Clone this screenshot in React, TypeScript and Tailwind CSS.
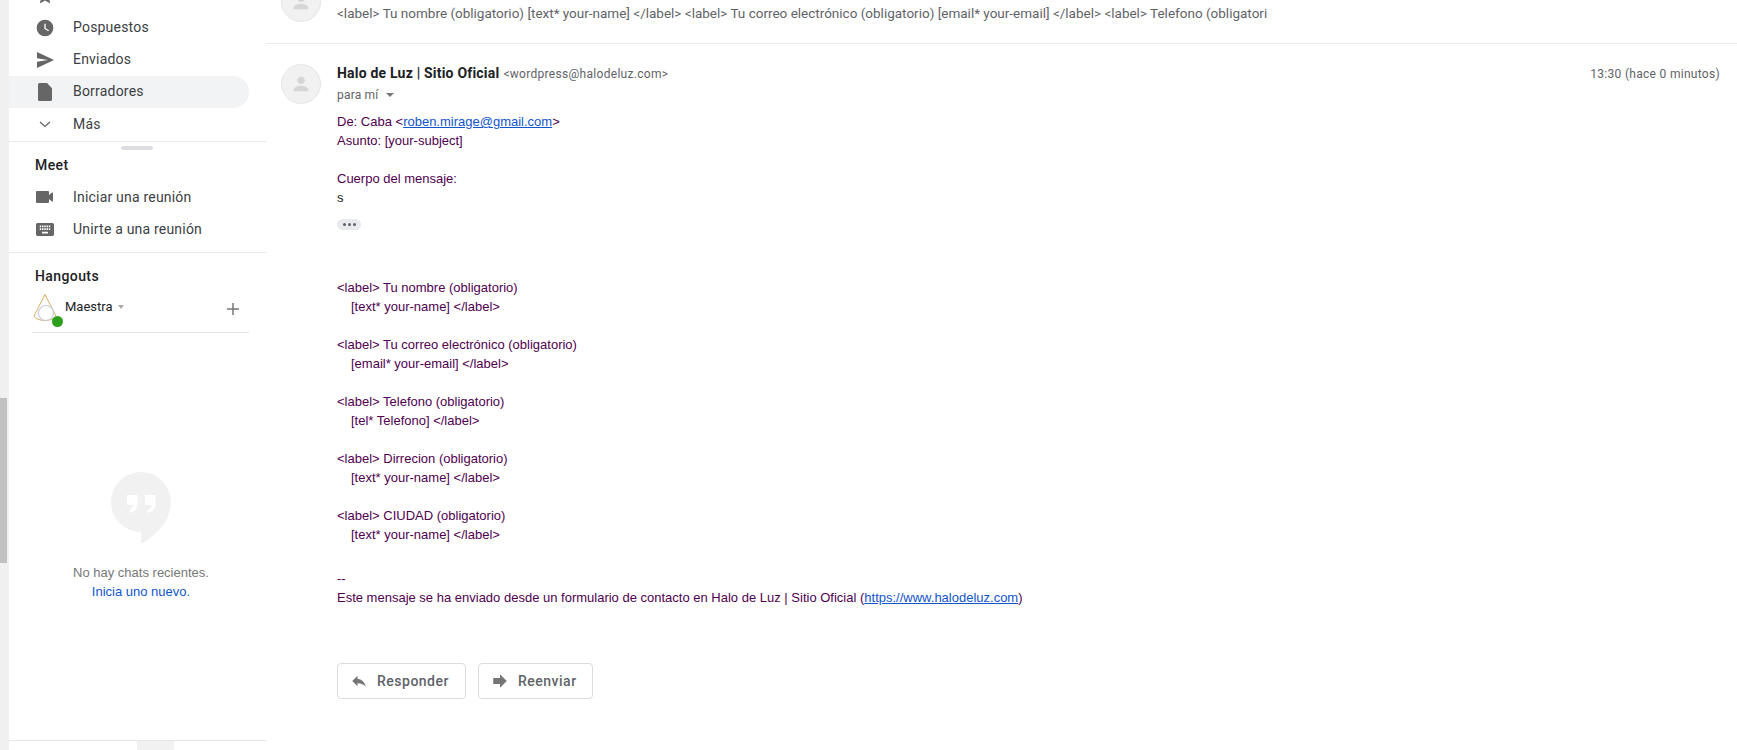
import React from "react";

const roboto = "font-['Roboto','Liberation_Sans',sans-serif]";

function Row({ icon, label, active, up }: { icon: React.ReactNode; label: string; active?: boolean; up?: boolean }) {
  return (
    <div className={`flex h-8 w-[240px] items-center rounded-r-full ${active ? "bg-[#f1f3f4]" : ""}`}>
      <div className="flex w-[64px] justify-center pl-[8px] text-[#666]">{icon}</div>
      <span className={`${roboto} ${up ? "-mt-[2px]" : ""} text-[14px] tracking-[0.2px] text-[#3c4043]`}>{label}</span>
    </div>
  );
}

const Star = () => (
  <svg width="20" height="20" viewBox="0 0 24 24" fill="#666"><path d="M12 17.3l6.2 3.7-1.6-7L22 9.2l-7.2-.6L12 2 9.2 8.6 2 9.2 7.5 14l-1.7 7z" /></svg>
);
const Clock = () => (
  <svg width="20" height="20" viewBox="0 0 24 24" fill="#666"><path fillRule="evenodd" d="M12 2a10 10 0 100 20 10 10 0 000-20zm.800 5h-1.600v6l4.800 2.900.800-1.300-4-2.400z" /></svg>
);
const Send = () => (
  <svg width="20" height="20" viewBox="0 0 20 20" fill="#666"><path d="M2 2l17 8-17 8 0-6.200 11-1.800-11-1.800z" /></svg>
);
const Draft = () => (
  <svg width="20" height="20" viewBox="0 0 20 20" fill="#666"><path d="M4.500 1h7.500l5 5.200v11.300a1.500 1.500 0 01-1.500 1.500h-11a1.500 1.500 0 01-1.500-1.500v-15a1.500 1.500 0 011.500-1.500z" /></svg>
);
const Chevron = () => (
  <svg width="20" height="20" viewBox="0 0 20 20" fill="none" stroke="#666" strokeWidth="1.200"><path d="M5 8l5 4.500 5-4.500" /></svg>
);
const Video = () => (
  <svg width="20" height="20" viewBox="0 0 20 20" fill="#666"><path d="M2 4h11a1 1 0 011 1v3l3-2.500h1v9h-1l-3-2.500v3a1 1 0 01-1 1h-11a1 1 0 01-1-1v-10a1 1 0 011-1z" /></svg>
);
const Keyboard = () => (
  <svg width="18" height="13" viewBox="0 5 24 15" preserveAspectRatio="none" fill="#666"><path d="M22 5H2C.9 5 0 5.900 0 7v11c0 1.100.9 2 2 2h20c1.100 0 2-.9 2-2V7c0-1.100-.9-2-2-2zM11 8h2v2h-2V8zm0 3h2v2h-2v-2zM8 8h2v2H8V8zm0 3h2v2H8v-2zm-1 2H5v-2h2v2zm0-3H5V8h2v2zm9 7H8v-2h8v2zm0-4h-2v-2h2v2zm0-3h-2V8h2v2zm3 3h-2v-2h2v2zm0-3h-2V8h2v2z" /></svg>
);
const Person = ({ size }: { size: number }) => (
  <svg width={size} height={size} viewBox="0 0 24 24" fill="#d6d6d6"><circle cx="12" cy="8" r="4" /><path d="M4 20v-1.500c0-3 5.300-4.500 8-4.500s8 1.500 8 4.500V20z" /></svg>
);

function Avatar() {
  return (
    <div className="flex h-10 w-10 shrink-0 items-center justify-center rounded-full border border-[#e6e6e6] bg-[#f1f1f1]">
      <Person size={22} />
    </div>
  );
}

function Sidebar() {
  return (
    <aside className="relative flex h-[750px] w-[257px] shrink-0 flex-col">
      <div className="-mt-[20px]">
        <Row icon={<Star />} label="" />
        <Row icon={<Clock />} label="Pospuestos" up />
        <Row icon={<Send />} label="Enviados" up />
        <Row icon={<Draft />} label="Borradores" active up />
        <Row icon={<Chevron />} label="Más" />
      </div>
      <div className="mt-[1px] border-t border-[#e9e9e9] pt-1">
        <div className="ml-[112px] h-[4px] w-8 rounded-full bg-[#dadce0]" />
      </div>
      <div className={`${roboto} ml-[26px] mt-[5px] text-[14px] font-medium leading-5 tracking-[0.4px] text-[#202124]`}>Meet</div>
      <div className="mt-[6px]">
        <Row icon={<Video />} label="Iniciar una reunión" />
        <Row icon={<Keyboard />} label="Unirte a una reunión" />
      </div>
      <div className="mt-[7px] border-t border-[#e9e9e9]" />
      <div className={`${roboto} ml-[26px] mt-[13px] text-[14px] font-medium leading-5 tracking-[0.4px] text-[#202124]`}>Hangouts</div>
      <div className="ml-[23px] mt-[6px] flex h-[34px] w-[217px] items-center">
        <div className="relative h-[30px] w-[32px] shrink-0">
          <svg width="30" height="30" viewBox="0 0 30 30" fill="none">
            <path d="M13 0.500L2 22c3 6 19 6 22 0z" stroke="#dcae62" strokeWidth="1" />
            <circle cx="14" cy="19" r="7.500" stroke="#c4cfdc" strokeWidth="1.200" />
          </svg>
          <div className="absolute bottom-[-3px] left-[20px] h-[11px] w-[11px] rounded-full bg-[#2ca01c]" />
        </div>
        <span className={`${roboto} -mt-1 ml-[1px] text-[13px] text-[#202124]`}>Maestra</span>
        <span className="-mt-1 ml-[5px] h-0 w-0 border-x-[3.500px] border-t-[4px] border-x-transparent border-t-[#aaa]" />
        <svg className="ml-auto mr-[10px]" width="12" height="12" viewBox="0 0 12 12" stroke="#777" strokeWidth="1.500"><path d="M6 0v12M0 6h12" /></svg>
      </div>
      <div className="ml-[23px] mt-[6px] w-[217px] border-t border-[#e3e3e3]" />
      <div className="mt-[139px] flex flex-col items-center pl-[7px]">
        <svg width="60" height="72" viewBox="0 0 60 72" fill="#f1f1f1">
          <path d="M30 0a30 30 0 0130 30c0 18-14 33-30 42V60A30 30 0 1130 0z" />
          <path fill="#fff" d="M16 23h10.500v9c0 5-3 8-8 9v-3c2-.5 3.500-2 3.800-5h-6.300zM34 23h10.500v9c0 5-3 8-8 9v-3c2-.5 3.500-2 3.800-5h-6.300z" />
        </svg>
        <div className="mt-[19px] font-['Liberation_Sans',sans-serif] text-[13px] leading-[19px] text-[#777]">No hay chats recientes.</div>
        <div className="font-['Liberation_Sans',sans-serif] text-[13px] leading-[19px] text-[#1155cc]">Inicia uno nuevo.</div>
      </div>
      <div className="absolute bottom-[9px] left-0 h-px w-full bg-[#e6e6e6]" />
      <div className="absolute bottom-0 left-[128px] h-[9px] w-[37px] bg-[#f1f1f1]" />
    </aside>
  );
}

const Q = ({ children }: { children: React.ReactNode }) => <div>{children}</div>;

function Main() {
  return (
    <main className="min-w-0 flex-1 overflow-hidden">
      <div className="flex h-[44px] border-b border-[#ececec] pl-[15px]">
        <div className="-mt-[18px]"><Avatar /></div>
        <div className={`${roboto} ml-[16px] mt-[4px] whitespace-nowrap text-[13.5px] leading-[19px] text-[#5f6368]`}>
          {"<label> Tu nombre (obligatorio) [text* your-name] </label> <label> Tu correo electrónico (obligatorio) [email* your-email] </label> <label> Telefono (obligatori"}
        </div>
      </div>
      <div className="flex pl-[15px] pr-[17px] pt-[20px]">
        <Avatar />
        <div className="-mt-[1px] ml-[16px] min-w-0 flex-1">
          <div className="flex items-baseline justify-between">
            <div className="flex items-baseline">
              <span className={`${roboto} text-[14px] font-bold tracking-[0.2px] text-[#202124]`}>Halo de Luz | Sitio Oficial</span>
              <span className={`${roboto} ml-[4px] text-[12px] tracking-[0.3px] text-[#5f6368]`}>{"<wordpress@halodeluz.com>"}</span>
            </div>
            <span className={`${roboto} text-[12px] tracking-[0.3px] text-[#5f6368]`}>13:30 (hace 0 minutos)</span>
          </div>
          <div className={`${roboto} mt-[1px] flex items-center text-[12px] leading-5 tracking-[0.2px] text-[#5f6368]`}>
            para mí
            <span className="ml-[7px] h-0 w-0 border-x-[4px] border-t-[4px] border-x-transparent border-t-[#777]" />
          </div>
          <div className="mt-[7px] font-['Liberation_Sans',sans-serif] text-[13px] leading-[19px] text-[#500050]">
            <Q>De: Caba &lt;<span className="text-[#1155cc] underline">roben.mirage@gmail.com</span>&gt;</Q>
            <Q>Asunto: [your-subject]</Q>
            <div className="h-[19px]" />
            <Q>Cuerpo del mensaje:</Q>
            <div className="text-[#222]">s</div>
            <div className="mt-[12px] flex h-[11px] w-6 items-center justify-center gap-[2px] rounded-full bg-[#e8eaed]">
              <i className="h-[3px] w-[3px] rounded-full bg-[#5f6368]" />
              <i className="h-[3px] w-[3px] rounded-full bg-[#5f6368]" />
              <i className="h-[3px] w-[3px] rounded-full bg-[#5f6368]" />
            </div>
            <div className="h-[48px]" />
            <Block a="<label> Tu nombre (obligatorio)" b="[text* your-name] </label>" />
            <Block a="<label> Tu correo electrónico (obligatorio)" b="[email* your-email] </label>" />
            <Block a="<label> Telefono (obligatorio)" b="[tel* Telefono] </label>" />
            <Block a="<label> Dirrecion (obligatorio)" b="[text* your-name] </label>" />
            <Block a="<label> CIUDAD (obligatorio)" b="[text* your-name] </label>" />
            <div className="h-[6px]" />
            <Q>--</Q>
            <Q>Este mensaje se ha enviado desde un formulario de contacto en Halo de Luz | Sitio Oficial (<span className="text-[#1155cc] underline">https://www.halodeluz.com</span>)</Q>
          </div>
          <div className="mt-[56px] flex gap-3">
            <Btn label="Responder" w="w-[129px]" icon={<svg width="18" height="18" viewBox="0 0 24 24" fill="#757575"><path d="M10 9V5l-7 7 7 7v-4.100c5 0 8.500 1.600 11 5.100-1-5-4-10-11-11z" /></svg>} />
            <Btn label="Reenviar" w="w-[115px]" icon={<svg width="18" height="18" viewBox="0 0 24 24" fill="#757575"><path d="M3 8h9V3l9 9-9 9v-5H3z" /></svg>} />
          </div>
        </div>
      </div>
    </main>
  );
}

function Block({ a, b }: { a: string; b: string }) {
  return (
    <div className="mb-[19px]">
      <div>{a}</div>
      <div className="pl-[14px]">{b}</div>
    </div>
  );
}

function Btn({ label, w, icon }: { label: string; w: string; icon: React.ReactNode }) {
  return (
    <div className={`flex h-9 ${w} items-center rounded border border-[#dadce0] pl-[12px]`}>
      {icon}
      <span className={`${roboto} ml-[9px] text-[14px] font-medium tracking-[0.5px] text-[#5f6368]`}>{label}</span>
    </div>
  );
}

export default function App() {
  return (
    <div className="flex h-[750px] w-[1737px] overflow-hidden bg-white">
      <div className="flex h-full w-[9px] shrink-0 flex-col bg-[#f0f0f0]">
        <div className="mt-[398px] h-[165px] w-[7px] bg-[#c1c1c1]" />
      </div>
      <Sidebar />
      <Main />
    </div>
  );
}
